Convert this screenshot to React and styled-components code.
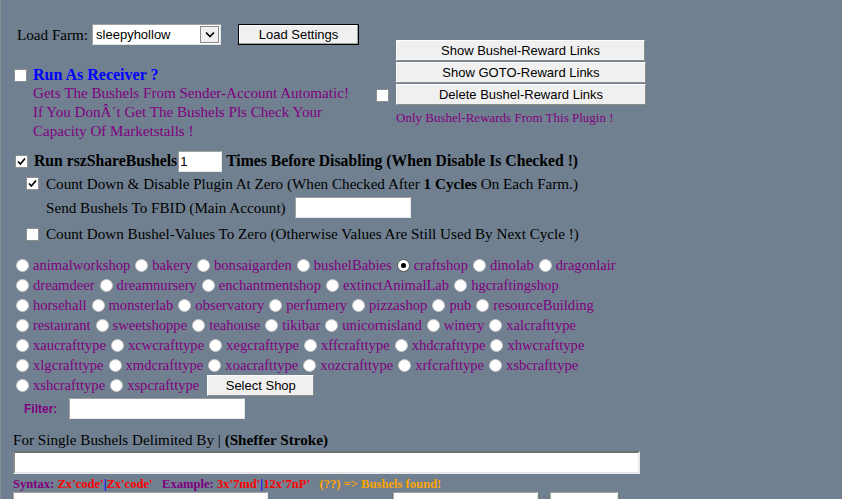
import React from "react";
import styled, { createGlobalStyle, css } from "styled-components";

const GlobalStyle = createGlobalStyle`
  html, body {
    margin: 0;
    padding: 0;
  }
  body {
    background: #708090;
    font-family: "Liberation Serif", "Times New Roman", serif;
    color: #000;
  }
`;

const Page = styled.div`
  width: 842px;
  height: 499px;
  overflow: hidden;
  box-sizing: border-box;
  border-left: 1px solid #878c93;
  padding-left: 12px;
`;

const TopArea = styled.div`
  display: flex;
  align-items: flex-start;
  height: 150px;
`;

const LeftCol = styled.div`
  width: 363px;
`;

const FarmRow = styled.div`
  margin-top: 24px;
  height: 21px;
  display: flex;
  align-items: center;
`;

const Label = styled.span`
  font-size: ${(p) => (p.$bold ? 15.7 : 15.15)}px;
  white-space: nowrap;
  margin-left: ${(p) => p.$ml || 0}px;
  font-weight: ${(p) => (p.$bold ? "bold" : "normal")};
  color: ${(p) => p.$color || "#000"};
`;

const FakeSelect = styled.div`
  margin-left: 4px;
  width: 129px;
  height: 21px;
  box-sizing: border-box;
  background: #fff;
  border: 1px solid;
  border-color: #a0a0a0 #e3e3e3 #e3e3e3 #a0a0a0;
  display: flex;
  align-items: stretch;
  font-family: "Liberation Sans", Arial, sans-serif;
  font-size: 13px;
`;

const SelectText = styled.span`
  flex: 1;
  padding-left: 3px;
  display: flex;
  align-items: center;
`;

const SelectArrow = styled.span`
  width: 19px;
  margin: 1px;
  box-sizing: border-box;
  background: #f0f0f0;
  border: 1px solid #8a8a8a;
  display: flex;
  align-items: center;
  justify-content: center;
`;

const Button = styled.button`
  font-family: "Liberation Sans", Arial, sans-serif;
  font-size: 13px;
  color: #000;
  background: #f0f0f0;
  height: ${(p) => p.$h || 21}px;
  width: ${(p) => p.$w}px;
  margin-left: ${(p) => p.$ml || 0}px;
  padding: 0;
  box-sizing: border-box;
  border: 1px solid;
  border-color: #fdfdfd #8c8c8c #8c8c8c #fdfdfd;
  ${(p) =>
    p.$primary &&
    css`
      border: 1px solid #000;
      box-shadow: inset -1px -1px 0 #a0a0a0, inset 1px 1px 0 #fff;
    `}
`;

const ReceiverRow = styled.div`
  margin-top: 21px;
  display: flex;
  align-items: flex-start;
`;

const ReceiverText = styled.div`
  margin-left: 6px;
`;

const Title = styled.div`
  color: #0000ff;
  font-weight: bold;
  font-size: 16px;
  line-height: 18px;
`;

const Note = styled.div`
  color: #800080;
  font-size: 15.1px;
  line-height: 19px;
  white-space: nowrap;
`;

const RightCol = styled.div`
  padding-top: 40px;
  display: grid;
  grid-template-columns: 20px 250px;
  align-content: start;
  row-gap: 1px;
`;

const LinkButton = styled(Button)`
  grid-column: 2;
  grid-row: ${(p) => p.$row};
`;

const CheckCell = styled.div`
  grid-column: 1;
  grid-row: 3;
  display: flex;
  align-items: flex-end;
  padding-bottom: 3px;
`;

const SmallNote = styled.div`
  grid-column: 2;
  grid-row: 4;
  color: #800080;
  font-size: 13px;
  margin-top: 4px;
  white-space: nowrap;
`;

const Row = styled.div`
  display: flex;
  align-items: center;
  height: ${(p) => p.$h || 22}px;
  margin-top: ${(p) => p.$mt || 0}px;
  padding-left: ${(p) => p.$pl || 0}px;
`;

const Box = styled.span`
  width: 13px;
  height: 13px;
  flex: none;
  box-sizing: border-box;
  background: #fff;
  border: 1px solid #8e8e8e;
  display: inline-flex;
  align-items: center;
  justify-content: center;
  margin-left: ${(p) => p.$ml || 0}px;
  margin-right: ${(p) => p.$mr || 0}px;
  margin-top: ${(p) => p.$mt || 0}px;
`;

const TextInput = styled.input`
  box-sizing: border-box;
  width: ${(p) => p.$w}px;
  height: ${(p) => p.$h || 21}px;
  margin-left: ${(p) => p.$ml || 0}px;
  margin-right: ${(p) => p.$mr || 0}px;
  flex: none;
  background: #fff;
  border: 1px solid;
  border-color: #a0a0a0 #e6e6e6 #e6e6e6 #a0a0a0;
  padding: 0 1px;
  font-family: "Liberation Sans", Arial, sans-serif;
  font-size: 13px;
  outline: none;
  ${(p) =>
    p.$deep &&
    css`
      border-width: 2px;
      border-color: #6e6e6e #e8e8e8 #e8e8e8 #8a8a8a;
    `}
`;

const ShopList = styled.div`
  margin-top: 10px;
`;

const RadioRow = styled.div`
  display: flex;
  align-items: center;
  height: 20px;
  padding-left: 3px;
`;

const RadioItem = styled.label`
  display: flex;
  align-items: center;
  margin-right: 5px;
  white-space: nowrap;
  color: #800080;
  font-size: 14.6px;
`;

const RadioDot = styled.span`
  width: 13px;
  height: 13px;
  box-sizing: border-box;
  border-radius: 50%;
  background: #fff;
  border: 1px solid #c8c8c8;
  margin-right: 4px;
  display: inline-flex;
  align-items: center;
  justify-content: center;
  &::after {
    content: "";
    width: 5px;
    height: 5px;
    border-radius: 50%;
    background: ${(p) => (p.$on ? "#000" : "transparent")};
  }
  ${(p) =>
    p.$on &&
    css`
      border-color: #555;
    `}
`;

const FilterLabel = styled.span`
  font-family: "Liberation Sans", Arial, sans-serif;
  font-weight: bold;
  font-size: 12px;
  color: #800080;
  margin-left: 11px;
  width: 45px;
`;

const Syntax = styled.div`
  margin-top: 3px;
  height: 15px;
  line-height: 15px;
  font-size: 12.6px;
  font-weight: bold;
  white-space: pre;
`;

const Part = styled.span`
  color: ${(p) => p.$c};
`;

const BottomRow = styled.div`
  display: flex;
`;

const Check = () => (
  <svg width="9" height="9" viewBox="0 0 9 9">
    <path d="M1 4.5 L3.4 7 L8 1.5" fill="none" stroke="#000" strokeWidth="1.7" />
  </svg>
);

const shopRows = [
  ["animalworkshop", "bakery", "bonsaigarden", "bushelBabies", "craftshop", "dinolab", "dragonlair"],
  ["dreamdeer", "dreamnursery", "enchantmentshop", "extinctAnimalLab", "hgcraftingshop"],
  ["horsehall", "monsterlab", "observatory", "perfumery", "pizzashop", "pub", "resourceBuilding"],
  ["restaurant", "sweetshoppe", "teahouse", "tikibar", "unicornisland", "winery", "xalcrafttype"],
  ["xaucrafttype", "xcwcrafttype", "xegcrafttype", "xffcrafttype", "xhdcrafttype", "xhwcrafttype"],
  ["xlgcrafttype", "xmdcrafttype", "xoacrafttype", "xozcrafttype", "xrfcrafttype", "xsbcrafttype"],
  ["xshcrafttype", "xspcrafttype"],
];

const App = () => {
  return (
    <>
      <GlobalStyle />
      <Page>
        <TopArea>
          <LeftCol>
            <FarmRow>
              <Label $ml={4}>Load Farm:</Label>
              <FakeSelect>
                <SelectText>sleepyhollow</SelectText>
                <SelectArrow>
                  <svg width="10" height="7" viewBox="0 0 10 7">
                    <path d="M1 1.5 L5 5.5 L9 1.5" fill="none" stroke="#000" strokeWidth="1.6" />
                  </svg>
                </SelectArrow>
              </FakeSelect>
              <Button $primary $w={121} $ml={17}>
                Load Settings
              </Button>
            </FarmRow>
            <ReceiverRow>
              <Box $ml={1} $mt={3} />
              <ReceiverText>
                <Title>Run As Receiver ?</Title>
                <Note>Gets The Bushels From Sender-Account Automatic!</Note>
                <Note>If You DonÂ´t Get The Bushels Pls Check Your</Note>
                <Note>Capacity Of Marketstalls !</Note>
              </ReceiverText>
            </ReceiverRow>
          </LeftCol>
          <RightCol>
            <LinkButton $w={249} $row={1}>
              Show Bushel-Reward Links
            </LinkButton>
            <LinkButton $w={250} $row={2}>
              Show GOTO-Reward Links
            </LinkButton>
            <CheckCell>
              <Box />
            </CheckCell>
            <LinkButton $w={250} $row={3}>
              Delete Bushel-Reward Links
            </LinkButton>
            <SmallNote>Only Bushel-Rewards From This Plugin !</SmallNote>
          </RightCol>
        </TopArea>

        <Row $h={22}>
          <Box $ml={2} $mr={6}>
            <Check />
          </Box>
          <Label $bold>Run rszShareBushels</Label>
          <TextInput $w={44} $ml={1} $mr={4} defaultValue="1" />
          <Label $bold>Times Before Disabling (When Disable Is Checked !)</Label>
        </Row>
        <Row $h={23}>
          <Box $ml={13} $mr={7}>
            <Check />
          </Box>
          <Label>
            Count Down &amp; Disable Plugin At Zero (When Checked After <b>1 Cycles</b> On Each Farm.)
          </Label>
        </Row>
        <Row $h={23} $mt={1} $pl={33}>
          <Label>Send Bushels To FBID (Main Account)</Label>
          <TextInput $w={116} $ml={9} />
        </Row>
        <Row $h={22} $mt={4}>
          <Box $ml={13} $mr={7} />
          <Label>Count Down Bushel-Values To Zero (Otherwise Values Are Still Used By Next Cycle !)</Label>
        </Row>

        <ShopList>
          {shopRows.map((row, i) => (
            <RadioRow key={i}>
              {row.map((name) => (
                <RadioItem key={name}>
                  <RadioDot $on={name === "craftshop"} />
                  {name}
                </RadioItem>
              ))}
              {i === shopRows.length - 1 && (
                <Button $w={107} $ml={3}>
                  Select Shop
                </Button>
              )}
            </RadioRow>
          ))}
        </ShopList>

        <Row $h={21} $mt={3}>
          <FilterLabel>Filter:</FilterLabel>
          <TextInput $w={176} />
        </Row>

        <Row $h={18} $mt={12}>
          <Label>
            For Single Bushels Delimited By | <b>(Sheffer Stroke)</b>
          </Label>
        </Row>
        <Row $h={23} $mt={2}>
          <TextInput $deep $w={627} $h={23} />
        </Row>
        <Syntax>
          <Part $c="#800080">Syntax: </Part>
          <Part $c="#ff0000">Zx'code'</Part>
          <Part $c="#0000ff">|</Part>
          <Part $c="#ff0000">Zx'code'</Part>
          <Part $c="#800080">{"   Example: "}</Part>
          <Part $c="#ff0000">3x'7md'</Part>
          <Part $c="#0000ff">|</Part>
          <Part $c="#ff0000">12x'7nP'</Part>
          <Part $c="#ffa500">{"   (??) => Bushels found!"}</Part>
        </Syntax>
        <BottomRow>
          <TextInput $w={255} $h={22} />
          <TextInput $w={145} $h={22} $ml={125} />
          <TextInput $w={68} $h={22} $ml={12} />
        </BottomRow>
      </Page>
    </>
  );
};

export default App;
